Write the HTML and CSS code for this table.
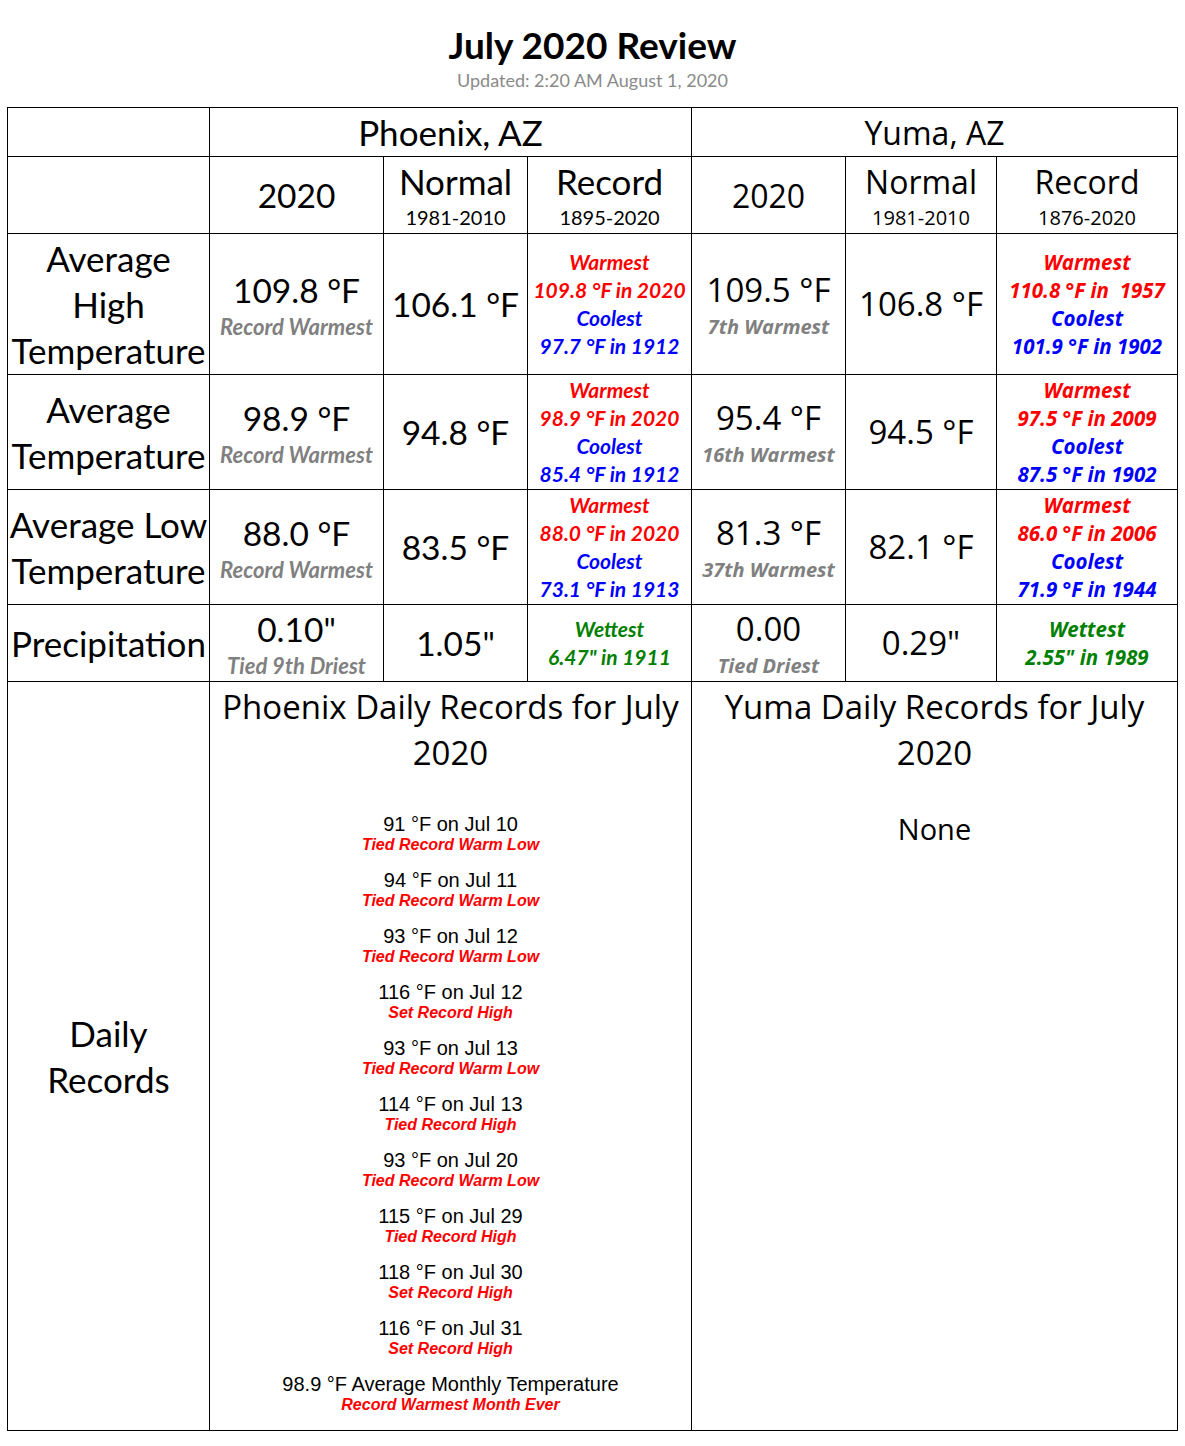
FILE: index.html
```html
<!DOCTYPE html>
<html>
<head>
<meta charset="utf-8">
<title>July 2020 Review</title>
<link rel="stylesheet" href="styles.css">
</head>
<body>
<div class="page">
  <h1 class="title">July 2020 Review</h1>
  <div class="updated">Updated: 2:20 AM August 1, 2020</div>
  <table class="review">
    <colgroup>
      <col class="c1"><col class="c2"><col class="c3"><col class="c4"><col class="c5"><col class="c6"><col class="c7">
    </colgroup>
    <tr class="r-city">
      <td></td>
      <td colspan="3" class="cal big">Phoenix, AZ</td>
      <td colspan="3" class="seg ybig">Yuma, AZ</td>
    </tr>
    <tr class="r-head">
      <td></td>
      <td class="cal year">2020</td>
      <td class="cal"><div class="big">Normal</div><div class="sub">1981-2010</div></td>
      <td class="cal"><div class="big">Record</div><div class="sub">1895-2020</div></td>
      <td class="seg ybig">2020</td>
      <td class="seg"><div class="ybig">Normal</div><div class="ysub">1981-2010</div></td>
      <td class="seg"><div class="ybig">Record</div><div class="ysub">1876-2020</div></td>
    </tr>
    <tr class="r-high">
      <td class="cal label">Average<br>High<br>Temperature</td>
      <td class="cal"><div class="val">109.8 &deg;F</div><div class="note">Record Warmest</div></td>
      <td class="cal val">106.1 &deg;F</td>
      <td class="cal rec"><div class="warm">Warmest</div><div class="warm">109.8 &deg;F in 2020</div><div class="cool">Coolest</div><div class="cool">97.7 &deg;F in 1912</div></td>
      <td class="seg"><div class="yval">109.5 &deg;F</div><div class="ynote">7th Warmest</div></td>
      <td class="seg yval">106.8 &deg;F</td>
      <td class="seg yrec"><div class="warm">Warmest</div><div class="warm">110.8 &deg;F in&nbsp; 1957</div><div class="cool">Coolest</div><div class="cool">101.9 &deg;F in 1902</div></td>
    </tr>
    <tr class="r-avg">
      <td class="cal label">Average<br>Temperature</td>
      <td class="cal"><div class="val">98.9 &deg;F</div><div class="note">Record Warmest</div></td>
      <td class="cal val">94.8 &deg;F</td>
      <td class="cal rec"><div class="warm">Warmest</div><div class="warm">98.9 &deg;F in 2020</div><div class="cool">Coolest</div><div class="cool">85.4 &deg;F in 1912</div></td>
      <td class="seg"><div class="yval">95.4 &deg;F</div><div class="ynote">16th Warmest</div></td>
      <td class="seg yval">94.5 &deg;F</td>
      <td class="seg yrec"><div class="warm">Warmest</div><div class="warm">97.5 &deg;F in 2009</div><div class="cool">Coolest</div><div class="cool">87.5 &deg;F in 1902</div></td>
    </tr>
    <tr class="r-low">
      <td class="cal label">Average Low<br>Temperature</td>
      <td class="cal"><div class="val">88.0 &deg;F</div><div class="note">Record Warmest</div></td>
      <td class="cal val">83.5 &deg;F</td>
      <td class="cal rec"><div class="warm">Warmest</div><div class="warm">88.0 &deg;F in 2020</div><div class="cool">Coolest</div><div class="cool">73.1 &deg;F in 1913</div></td>
      <td class="seg"><div class="yval">81.3 &deg;F</div><div class="ynote">37th Warmest</div></td>
      <td class="seg yval">82.1 &deg;F</td>
      <td class="seg yrec"><div class="warm">Warmest</div><div class="warm">86.0 &deg;F in 2006</div><div class="cool">Coolest</div><div class="cool">71.9 &deg;F in 1944</div></td>
    </tr>
    <tr class="r-prec">
      <td class="cal label">Precipitation</td>
      <td class="cal"><div class="val">0.10"</div><div class="note">Tied 9th Driest</div></td>
      <td class="cal val">1.05"</td>
      <td class="cal rec"><div class="wet">Wettest</div><div class="wet">6.47" in 1911</div></td>
      <td class="seg"><div class="yval">0.00</div><div class="ynote">Tied Driest</div></td>
      <td class="seg yval">0.29"</td>
      <td class="seg yrec"><div class="wet">Wettest</div><div class="wet">2.55" in 1989</div></td>
    </tr>
    <tr class="r-daily">
      <td class="cal label">Daily<br>Records</td>
      <td colspan="3" class="daily">
        <div class="d-head">Phoenix Daily Records for July<br>2020</div>
        <div class="d-list">
          <div class="d-item"><div class="d-val">91 &deg;F on Jul 10</div><div class="d-note">Tied Record Warm Low</div></div>
          <div class="d-item"><div class="d-val">94 &deg;F on Jul 11</div><div class="d-note">Tied Record Warm Low</div></div>
          <div class="d-item"><div class="d-val">93 &deg;F on Jul 12</div><div class="d-note">Tied Record Warm Low</div></div>
          <div class="d-item"><div class="d-val">116 &deg;F on Jul 12</div><div class="d-note">Set Record High</div></div>
          <div class="d-item"><div class="d-val">93 &deg;F on Jul 13</div><div class="d-note">Tied Record Warm Low</div></div>
          <div class="d-item"><div class="d-val">114 &deg;F on Jul 13</div><div class="d-note">Tied Record High</div></div>
          <div class="d-item"><div class="d-val">93 &deg;F on Jul 20</div><div class="d-note">Tied Record Warm Low</div></div>
          <div class="d-item"><div class="d-val">115 &deg;F on Jul 29</div><div class="d-note">Tied Record High</div></div>
          <div class="d-item"><div class="d-val">118 &deg;F on Jul 30</div><div class="d-note">Set Record High</div></div>
          <div class="d-item"><div class="d-val">116 &deg;F on Jul 31</div><div class="d-note">Set Record High</div></div>
          <div class="d-item"><div class="d-val">98.9 &deg;F Average Monthly Temperature</div><div class="d-note">Record Warmest Month Ever</div></div>
        </div>
      </td>
      <td colspan="3" class="daily">
        <div class="d-head">Yuma Daily Records for July<br>2020</div>
        <div class="d-none">None</div>
      </td>
    </tr>
  </table>
</div>
</body>
</html>
```

FILE: styles.css
```css
html, body {
  margin: 0;
  padding: 0;
  background: #ffffff;
  color: #000000;
}

.page {
  padding: 22px 0 0 7px;
  width: 1171px;
}

.title {
  margin: 0;
  text-align: center;
  font-family: Lato, "Liberation Sans", sans-serif;
  font-weight: 700;
  font-size: 37px;
  line-height: 45px;
}

.updated {
  margin: 1px 0 15px;
  text-align: center;
  font-family: Lato, "Liberation Sans", sans-serif;
  font-size: 18px;
  line-height: 24px;
  color: #8a8a8a;
}

.review {
  width: 1171px;
  border-collapse: collapse;
  table-layout: fixed;
}

.c1 { width: 202px; }
.c2 { width: 174px; }
.c3 { width: 144px; }
.c4 { width: 164px; }
.c5 { width: 154px; }
.c6 { width: 151px; }
.c7 { width: 181px; }

.review td {
  border: 1px solid #000;
  padding: 0;
  text-align: center;
  vertical-align: middle;
  white-space: nowrap;
}

.r-city { height: 49px; }
.r-head { height: 77px; }
.r-high { height: 141px; }
.r-avg { height: 115px; }
.r-low { height: 115px; }
.r-prec { height: 77px; }
.r-daily { height: 749px; }

.cal { font-family: Lato, "Liberation Sans", sans-serif; }
.seg { font-family: "Open Sans", "Noto Sans", sans-serif; }

.big { font-size: 35px; line-height: 45px; }
.year { font-size: 33.5px; line-height: 45px; }
.sub { font-size: 20px; line-height: 27px; }
.ybig { font-size: 32px; line-height: 45px; }
.ysub { font-size: 20px; line-height: 27px; }

.label { font-size: 35px; line-height: 46px; }

.val { font-size: 33.5px; line-height: 46px; }
.yval { font-size: 33px; line-height: 46px; }

.note {
  font-size: 22px;
  line-height: 28px;
  font-weight: 700;
  font-style: italic;
  color: #808080;
}

.ynote {
  font-family: "Open Sans", "Noto Sans", sans-serif;
  font-size: 20px;
  line-height: 28px;
  font-weight: 700;
  font-style: italic;
  color: #808080;
}

.rec {
  font-size: 21px;
  line-height: 28px;
  font-weight: 700;
  font-style: italic;
}

.yrec {
  font-size: 20.5px;
  line-height: 28px;
  font-weight: 700;
  font-style: italic;
}

.warm { color: #ff0000; }
.cool { color: #0000ff; }
.wet { color: #008000; }

.review td.daily {
  vertical-align: top;
  padding-top: 2px;
}

.d-head {
  font-family: "Open Sans", "Noto Sans", sans-serif;
  font-size: 33px;
  line-height: 46px;
}

.d-list {
  margin-top: 37px;
  font-family: "Liberation Sans", Arial, sans-serif;
}

.d-item { margin-bottom: 15px; }

.d-val {
  font-size: 20px;
  line-height: 23px;
}

.d-note {
  font-size: 16px;
  line-height: 18px;
  font-weight: 700;
  font-style: italic;
  color: #ff0000;
}

.d-none {
  margin-top: 33px;
  font-family: "Open Sans", "Noto Sans", sans-serif;
  font-size: 29px;
  line-height: 40px;
}
```
